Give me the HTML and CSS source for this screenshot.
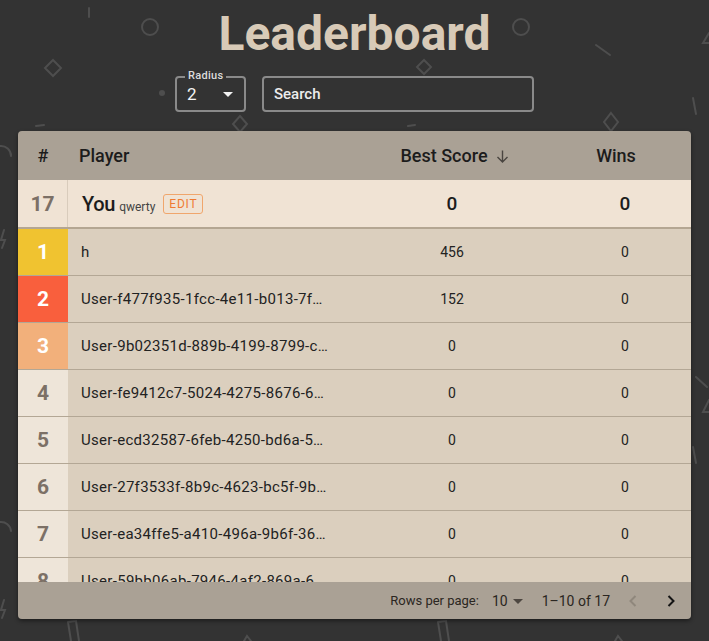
FILE: index.html
```html
<!DOCTYPE html>
<html lang="en">
<head>
<meta charset="utf-8">
<title>Leaderboard</title>
<link rel="stylesheet" href="styles.css">
</head>
<body>
<svg class="decor" width="709" height="641" viewBox="0 0 709 641" aria-hidden="true">
  <g fill="none" stroke="#4e4e4e" stroke-width="2" stroke-linecap="round">
    <line x1="89" y1="8" x2="89" y2="17"/>
    <circle cx="150" cy="27" r="8"/>
    <circle cx="521" cy="27" r="8"/>
    <path d="M53 60 L61 68 L53 76 L45 68 Z"/>
    <path d="M424 60 L431 67 L424 74 L417 67 Z"/>
    <line x1="596" y1="45" x2="610" y2="55"/>
    <path d="M709 33 L703 43 L709 43"/>
    <path d="M240 116 L247 124 L240 132 L233 124 Z"/>
    <path d="M611 113 L618 122 L611 131 L604 122 Z"/>
    <line x1="36" y1="126" x2="44" y2="125"/>
    <line x1="408" y1="126" x2="415" y2="125"/>
    <line x1="693" y1="98" x2="696" y2="114"/>
    <path d="M0 146 A10 10 0 0 1 11 156"/>
    <path d="M0 522 A10 10 0 0 1 11 531"/>
    <path d="M4 230 L1 240 L5 240 L2 248"/>
    <path d="M4 600 L1 610 L5 610 L2 618"/>
    <line x1="696" y1="377" x2="707" y2="387"/>
    <path d="M709 400 L703 412 L709 412"/>
    <line x1="693" y1="447" x2="696" y2="463"/>
    <path d="M68 622 L76 621 L79 641 M68 622 L71 641"/>
    <path d="M438 622 L446 621 L449 641 M438 622 L441 641"/>
    <path d="M244 641 L247 636 L251 641"/>
    <path d="M615 641 L618 636 L622 641"/>
  </g>
  <circle cx="162" cy="93" r="3" fill="#4e4e4e"/>
</svg>

<main class="page">
  <h1 class="title">Leaderboard</h1>

  <div class="controls">
    <div class="select">
      <span class="select-label">Radius</span>
      <span class="select-value">2</span>
      <svg class="caret" width="10" height="5" viewBox="0 0 10 5"><path d="M0 0 L10 0 L5 5 Z" fill="#f2f2f2"/></svg>
    </div>
    <div class="search">Search</div>
  </div>

  <section class="card">
    <div class="row head">
      <div class="cell rank-h">#</div>
      <div class="cell player-h">Player</div>
      <div class="cell num-h score-h">Best Score
        <svg class="sort" width="15" height="15" viewBox="0 0 15 15"><path d="M7.5 1.5 V13 M2.5 8 L7.5 13 L12.5 8" fill="none" stroke="#4a4540" stroke-width="1.4"/></svg>
      </div>
      <div class="cell num-h">Wins<span class="sort-gap"></span></div>
    </div>

    <div class="row you">
      <div class="cell rank you-rank">17</div>
      <div class="cell you-player">
        <span class="you-name">You</span>
        <span class="you-handle">qwerty</span>
        <span class="edit">EDIT</span>
      </div>
      <div class="cell num you-num">0</div>
      <div class="cell num you-num">0</div>
    </div>

    <div class="body">
      <div class="row entry">
        <div class="cell rank gold">1</div>
        <div class="cell player">h</div>
        <div class="cell num">456</div>
        <div class="cell num">0</div>
      </div>
      <div class="row entry">
        <div class="cell rank red">2</div>
        <div class="cell player">User-f477f935-1fcc-4e11-b013-7f…</div>
        <div class="cell num">152</div>
        <div class="cell num">0</div>
      </div>
      <div class="row entry">
        <div class="cell rank peach">3</div>
        <div class="cell player">User-9b02351d-889b-4199-8799-c…</div>
        <div class="cell num">0</div>
        <div class="cell num">0</div>
      </div>
      <div class="row entry">
        <div class="cell rank">4</div>
        <div class="cell player">User-fe9412c7-5024-4275-8676-6…</div>
        <div class="cell num">0</div>
        <div class="cell num">0</div>
      </div>
      <div class="row entry">
        <div class="cell rank">5</div>
        <div class="cell player">User-ecd32587-6feb-4250-bd6a-5…</div>
        <div class="cell num">0</div>
        <div class="cell num">0</div>
      </div>
      <div class="row entry">
        <div class="cell rank">6</div>
        <div class="cell player">User-27f3533f-8b9c-4623-bc5f-9b…</div>
        <div class="cell num">0</div>
        <div class="cell num">0</div>
      </div>
      <div class="row entry">
        <div class="cell rank">7</div>
        <div class="cell player">User-ea34ffe5-a410-496a-9b6f-36…</div>
        <div class="cell num">0</div>
        <div class="cell num">0</div>
      </div>
      <div class="row entry">
        <div class="cell rank">8</div>
        <div class="cell player">User-59bb06ab-7946-4af2-869a-6…</div>
        <div class="cell num">0</div>
        <div class="cell num">0</div>
      </div>
    </div>

    <footer class="foot">
      <span class="rpp">Rows per page:</span>
      <span class="rpp-value">10</span>
      <svg class="rpp-caret" width="10" height="5" viewBox="0 0 10 5"><path d="M0 0 L10 0 L5 5 Z" fill="#4d4741"/></svg>
      <span class="range">1–10 of 17</span>
      <span class="pager">
        <svg width="24" height="24" viewBox="0 0 24 24"><path d="M14.5 7 L9.5 12 L14.5 17" fill="none" stroke="#8f877c" stroke-width="2"/></svg>
        <svg width="24" height="24" viewBox="0 0 24 24"><path d="M9.5 7 L14.5 12 L9.5 17" fill="none" stroke="#141414" stroke-width="2"/></svg>
      </span>
    </footer>
  </section>
</main>
</body>
</html>
```

FILE: styles.css
```css
html, body {
  margin: 0;
  padding: 0;
}

body {
  background: #333333;
  font-family: Roboto, "Noto Sans", "Liberation Sans", sans-serif;
  width: 709px;
  height: 641px;
  overflow: hidden;
  position: relative;
}

.decor {
  position: absolute;
  left: 0;
  top: 0;
}

.page {
  position: relative;
  display: flex;
  flex-direction: column;
  align-items: center;
}

.title {
  margin: 0;
  padding-top: 6px;
  font-size: 48px;
  line-height: 56px;
  font-weight: 700;
  color: #d8cab7;
}

.controls {
  display: flex;
  gap: 16px;
  margin-top: 14px;
}

.select {
  position: relative;
  box-sizing: border-box;
  width: 71px;
  height: 36px;
  border: 2px solid #8a8a8a;
  border-radius: 4px;
  display: flex;
  align-items: center;
  justify-content: space-between;
  padding: 0 11px 0 10px;
  color: #f4f4f4;
  font-size: 17px;
}

.select-label {
  position: absolute;
  top: -9px;
  left: 8px;
  padding: 0 3px;
  background: #333333;
  font-size: 11px;
  line-height: 14px;
  font-weight: 500;
  color: #dcdcdc;
  letter-spacing: 0.3px;
}

.caret {
  display: block;
}

.search {
  box-sizing: border-box;
  width: 272px;
  height: 36px;
  border: 2px solid #8a8a8a;
  border-radius: 4px;
  display: flex;
  align-items: center;
  padding-left: 10px;
  color: #ececec;
  font-size: 15px;
  font-weight: 500;
}

.card {
  align-self: stretch;
  margin: 19px 18px 0;
  height: 488px;
  display: flex;
  flex-direction: column;
  border-radius: 4px;
  overflow: hidden;
  box-shadow: 0 2px 4px rgba(0, 0, 0, 0.45);
}

.row {
  display: grid;
  grid-template-columns: 50px 277px 214px 132px;
}

.cell {
  display: flex;
  align-items: center;
  min-width: 0;
}

/* header */
.head {
  height: 49px;
  background: #aaa195;
  color: #1c1c1c;
  font-size: 18px;
  font-weight: 500;
}

.rank-h {
  justify-content: center;
}

.player-h {
  padding-left: 11px;
}

.num-h {
  justify-content: center;
}

.score-h {
  padding-left: 6px;
}

.sort {
  margin-left: 7px;
  margin-top: 2px;
}

.sort-gap {
  display: inline-block;
  width: 18px;
}

/* current user row */
.you {
  height: 47px;
  background: #f0e3d4;
  border-bottom: 2px solid #b4a692;
  color: #1c1c1c;
}

.you-rank {
  border-right: 1px solid #d9ccbc;
  font-size: 24px;
  font-weight: 500;
  color: #7c7066;
  background: transparent;
}

.you-player {
  padding-left: 14px;
  align-items: baseline;
  align-self: center;
}

.you-name {
  font-size: 20px;
  font-weight: 500;
  letter-spacing: -0.3px;
}

.you-handle {
  margin-left: 4px;
  font-size: 12px;
  color: #444;
}

.edit {
  margin-left: 8px;
  box-sizing: border-box;
  height: 20px;
  padding: 0 5px;
  border: 1px solid #f0a66c;
  border-radius: 3px;
  color: #ef7b33;
  font-size: 12px;
  line-height: 18px;
  letter-spacing: 0.8px;
  align-self: center;
}

.you-num {
  font-size: 19px;
  font-weight: 500;
}

/* body rows */
.body {
  flex: 1;
  overflow: hidden;
  background: #dbcfbe;
}

.entry {
  height: 46px;
  border-bottom: 1px solid #b3a795;
  background: #dbcfbe;
  color: #222;
  font-size: 14px;
}

.rank {
  justify-content: center;
  font-size: 21px;
  font-weight: 700;
  color: #7c7066;
  background: #eee5d9;
}

.you .rank {
  background: transparent;
}

.gold {
  background: #f0c330;
  color: #fff;
}

.red {
  background: #f95f3d;
  color: #fff;
}

.peach {
  background: #f2b07b;
  color: #fff;
}

.player {
  padding-left: 13px;
  padding-right: 6px;
  white-space: nowrap;
  overflow: hidden;
  text-overflow: ellipsis;
  display: block;
  line-height: 46px;
  font-size: 15px;
  letter-spacing: 0.3px;
}

.num {
  justify-content: center;
}

/* footer */
.foot {
  height: 37px;
  background: #aaa195;
  display: flex;
  align-items: center;
  justify-content: flex-end;
  padding-right: 8px;
  font-size: 13px;
  color: #2a2621;
}

.rpp-value {
  margin-left: 13px;
  font-size: 14px;
}

.rpp-caret {
  margin-left: 5px;
  margin-top: 1px;
}

.range {
  margin-left: 19px;
  font-size: 14px;
}

.pager {
  display: flex;
  gap: 14px;
  margin-left: 11px;
}

.pager svg {
  display: block;
}
```
